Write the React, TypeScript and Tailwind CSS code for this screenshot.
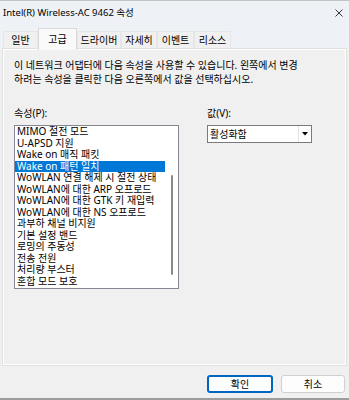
const tabs = [
  { label: "일반", w: "w-[35px]" },
  { label: "고급", w: "w-[39px]", active: true },
  { label: "드라이버", w: "w-[44px]" },
  { label: "자세히", w: "w-[36px]" },
  { label: "이벤트", w: "w-[37px]" },
  { label: "리소스", w: "w-[37px]" },
];

const props = [
  "MIMO 절전 모드",
  "U-APSD 지원",
  "Wake on 매직 패킷",
  "Wake on 패턴 일치",
  "WoWLAN 연결 해제 시 절전 상태",
  "WoWLAN에 대한 ARP 오프로드",
  "WoWLAN에 대한 GTK 키 재입력",
  "WoWLAN에 대한 NS 오프로드",
  "과부하 채널 비지원",
  "기본 설정 밴드",
  "로밍의 주동성",
  "전송 전원",
  "처리량 부스터",
  "혼합 모드 보호",
];

export default function App() {
  return (
    <div className="w-[349px] h-[400px] flex flex-col bg-[#f0f0f0] border-t border-[#c4c4c4] font-['Noto_Sans','Noto_Sans_CJK_KR',sans-serif] text-[10px] text-black overflow-hidden">
      {/* title bar */}
      <div className="h-[24px] flex items-center justify-between pl-[3px] pr-[6px] bg-[#eef2f6] text-[9.5px]">
        <span>Intel(R) Wireless-AC 9462 속성</span>
        <svg width="8" height="8" viewBox="0 0 8 8" className="text-[#222]">
          <path d="M0.5 0.5 L7.5 7.5 M7.5 0.5 L0.5 7.5" stroke="currentColor" strokeWidth="0.9" />
        </svg>
      </div>

      {/* tabs */}
      <div className="h-[24px] flex items-end pl-[3px] bg-[#eef2f6]">
        {tabs.map((t) =>
          t.active ? (
            <div
              key={t.label}
              className={`${t.w} h-[22px] -mb-px relative z-10 bg-[#f9f9f9] border border-b-0 border-[#dadada] flex items-start justify-center pt-[3px]`}
            >
              {t.label}
            </div>
          ) : (
            <div
              key={t.label}
              className={`${t.w} h-[18px] bg-[#f0f0f0] border border-b-0 border-[#e6e6e6] flex items-center justify-center`}
            >
              {t.label}
            </div>
          )
        )}
      </div>

      {/* panel */}
      <div className="mx-[3px] h-[316px] border border-white ring-1 ring-[#e0e0e0] pl-[10px] pt-[8px]">
        <p className="leading-[14px]">
          이 네트워크 어댑터에 다음 속성을 사용할 수 있습니다. 왼쪽에서 변경
          <br />
          하려는 속성을 클릭한 다음 오른쪽에서 값을 선택하십시오.
        </p>

        <div className="flex mt-[20px]">
          <div className="w-[165px]">
            <div className="leading-[14px] mb-[5px]">속성(P):</div>
            <div className="h-[164px] border border-[#828790] bg-white flex">
              <div className="w-[150px] flex flex-col">
                {props.map((p, i) => (
                  <div
                    key={p}
                    className={`h-[11.5px] leading-[11.5px] pl-[2px] whitespace-nowrap ${
                      i === 3 ? "bg-[#0078d7] text-white" : ""
                    }`}
                  >
                    {p}
                  </div>
                ))}
              </div>
              <div className="flex-1 flex justify-center pt-[49px]">
                <div className="w-[2px] h-[100px] bg-[#8a8a8a] rounded-full" />
              </div>
            </div>
          </div>

          <div className="ml-[28px]">
            <div className="leading-[14px] mb-[5px]">값(V):</div>
            <div className="w-[105px] h-[18px] border border-[#7a7a7a] bg-white flex">
              <span className="flex-1 pl-[2px] leading-[16px]">활성화함</span>
              <div className="w-[13px] border-l border-[#e2e2e2] flex items-center justify-center">
                <svg width="6" height="4" viewBox="0 0 6 4">
                  <path d="M0 0 H6 L3 3.5 Z" fill="#000" />
                </svg>
              </div>
            </div>
          </div>
        </div>
      </div>

      {/* buttons */}
      <div className="flex justify-end gap-[8px] pr-[4px] pt-[10px]">
        <button className="w-[66px] h-[18px] border-2 border-[#0067c0] rounded-[3px] bg-[#fdfdfd] leading-[14px]">
          확인
        </button>
        <button className="w-[64px] h-[18px] border border-[#d0d0d0] rounded-[3px] bg-[#fdfdfd] leading-[16px]">
          취소
        </button>
      </div>

      <div className="mt-auto h-[2px] bg-[#9c9c9c]" />
    </div>
  );
}
